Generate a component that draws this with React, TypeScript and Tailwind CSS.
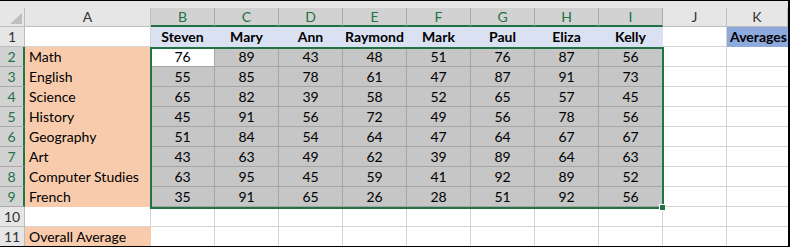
import React from "react";

const names = ["Steven", "Mary", "Ann", "Raymond", "Mark", "Paul", "Eliza", "Kelly"];
const subjects = ["Math", "English", "Science", "History", "Geography", "Art", "Computer Studies", "French"];
const data = [
  [76, 89, 43, 48, 51, 76, 87, 56],
  [55, 85, 78, 61, 47, 87, 91, 73],
  [65, 82, 39, 58, 52, 65, 57, 45],
  [45, 91, 56, 72, 49, 56, 78, 56],
  [51, 84, 54, 64, 47, 64, 67, 67],
  [43, 63, 49, 62, 39, 89, 64, 63],
  [63, 95, 45, 59, 41, 92, 89, 52],
  [35, 91, 65, 26, 28, 51, 92, 56],
];
const cols = ["A", "B", "C", "D", "E", "F", "G", "H", "I", "J", "K"];

const grid = "border-r border-b border-[#d4d4d4]";

export default function App() {
  const cells: React.ReactNode[] = [];

  // header row
  cells.push(
    <div key="corner" className="relative bg-[#e6e6e6] border-r border-b border-[#bdbdbd]">
      <svg width="25" height="19" className="absolute left-0 top-0">
        <polygon points="22,5 22,16 10,16" fill="#bfbfbf" />
      </svg>
    </div>
  );
  cols.forEach((c, i) => {
    const sel = i >= 1 && i <= 8;
    cells.push(
      <div
        key={"h" + c}
        className={
          "flex items-center justify-center border-r " +
          (sel
            ? "bg-[#d2d2d2] border-[#ababab] border-b-2 border-b-[#217346] text-[#217346]"
            : "bg-[#e6e6e6] border-[#bdbdbd] border-b border-b-[#bdbdbd] text-[#333333]")
        }
      >
        {c}
      </div>
    );
  });

  for (let r = 1; r <= 11; r++) {
    const selRow = r >= 2 && r <= 9;
    cells.push(
      <div
        key={"r" + r}
        className={
          "flex items-center justify-center border-b " +
          (selRow
            ? "bg-[#d2d2d2] border-[#ababab] border-r-2 border-r-[#217346] text-[#217346]"
            : "bg-[#e6e6e6] border-[#bdbdbd] border-r border-r-[#bdbdbd] text-[#333333]")
        }
      >
        {r}
      </div>
    );
    // column A
    if (selRow) {
      cells.push(
        <div key={"a" + r} className="bg-[#f8cbad] border-r border-b border-[#f8cbad] pl-[4px] flex items-center whitespace-nowrap">
          {subjects[r - 2]}
        </div>
      );
    } else if (r === 11) {
      cells.push(
        <div key={"a" + r} className="bg-[#f8cbad] border-r border-b border-[#f8cbad] pl-[4px] flex items-center whitespace-nowrap">
          Overall Average
        </div>
      );
    } else {
      cells.push(<div key={"a" + r} className={"bg-white " + grid} />);
    }
    // B..I
    for (let c = 0; c < 8; c++) {
      if (r === 1) {
        cells.push(
          <div key={"d" + r + c} className="bg-[#d9e1f2] border-r border-b border-[#d9e1f2] flex items-center justify-center font-bold">
            {names[c]}
          </div>
        );
      } else if (selRow) {
        const active = r === 2 && c === 0;
        cells.push(
          <div
            key={"d" + r + c}
            className={
              "flex items-center justify-center border-r border-b border-[#a6a6a6] " +
              (active ? "bg-white" : "bg-[#c6c6c6]")
            }
          >
            {data[r - 2][c]}
          </div>
        );
      } else {
        cells.push(<div key={"d" + r + c} className={"bg-white " + grid} />);
      }
    }
    // J
    cells.push(<div key={"j" + r} className={"bg-white " + grid} />);
    // K
    if (r === 1) {
      cells.push(
        <div key={"k" + r} className="bg-[#8ea9db] border-b border-[#8ea9db] pl-[3px] flex items-center font-bold whitespace-nowrap overflow-hidden">
          Averages
        </div>
      );
    } else {
      cells.push(<div key={"k" + r} className="bg-white border-b border-[#d4d4d4]" />);
    }
  }

  return (
    <div
      className="w-[790px] h-[247px] overflow-hidden bg-white border-t border-r-2 border-b border-black text-[14px] text-black leading-none"
      style={{ fontFamily: "Lato, 'Liberation Sans', sans-serif" }}
    >
      <div className="h-[7px] bg-[#e6e6e6]" />
      <div className="relative grid grid-cols-[25px_126px_repeat(9,64px)_61px] grid-rows-[19px_repeat(11,20px)]">
        {cells}
        <div className="absolute left-[150px] top-[39px] w-[514px] h-[162px] border-2 border-[#217346] pointer-events-none" />
        <div className="absolute left-[659px] top-[196px] w-[7px] h-[7px] bg-white p-[1px]">
          <div className="w-full h-full bg-[#217346]" />
        </div>
      </div>
    </div>
  );
}
